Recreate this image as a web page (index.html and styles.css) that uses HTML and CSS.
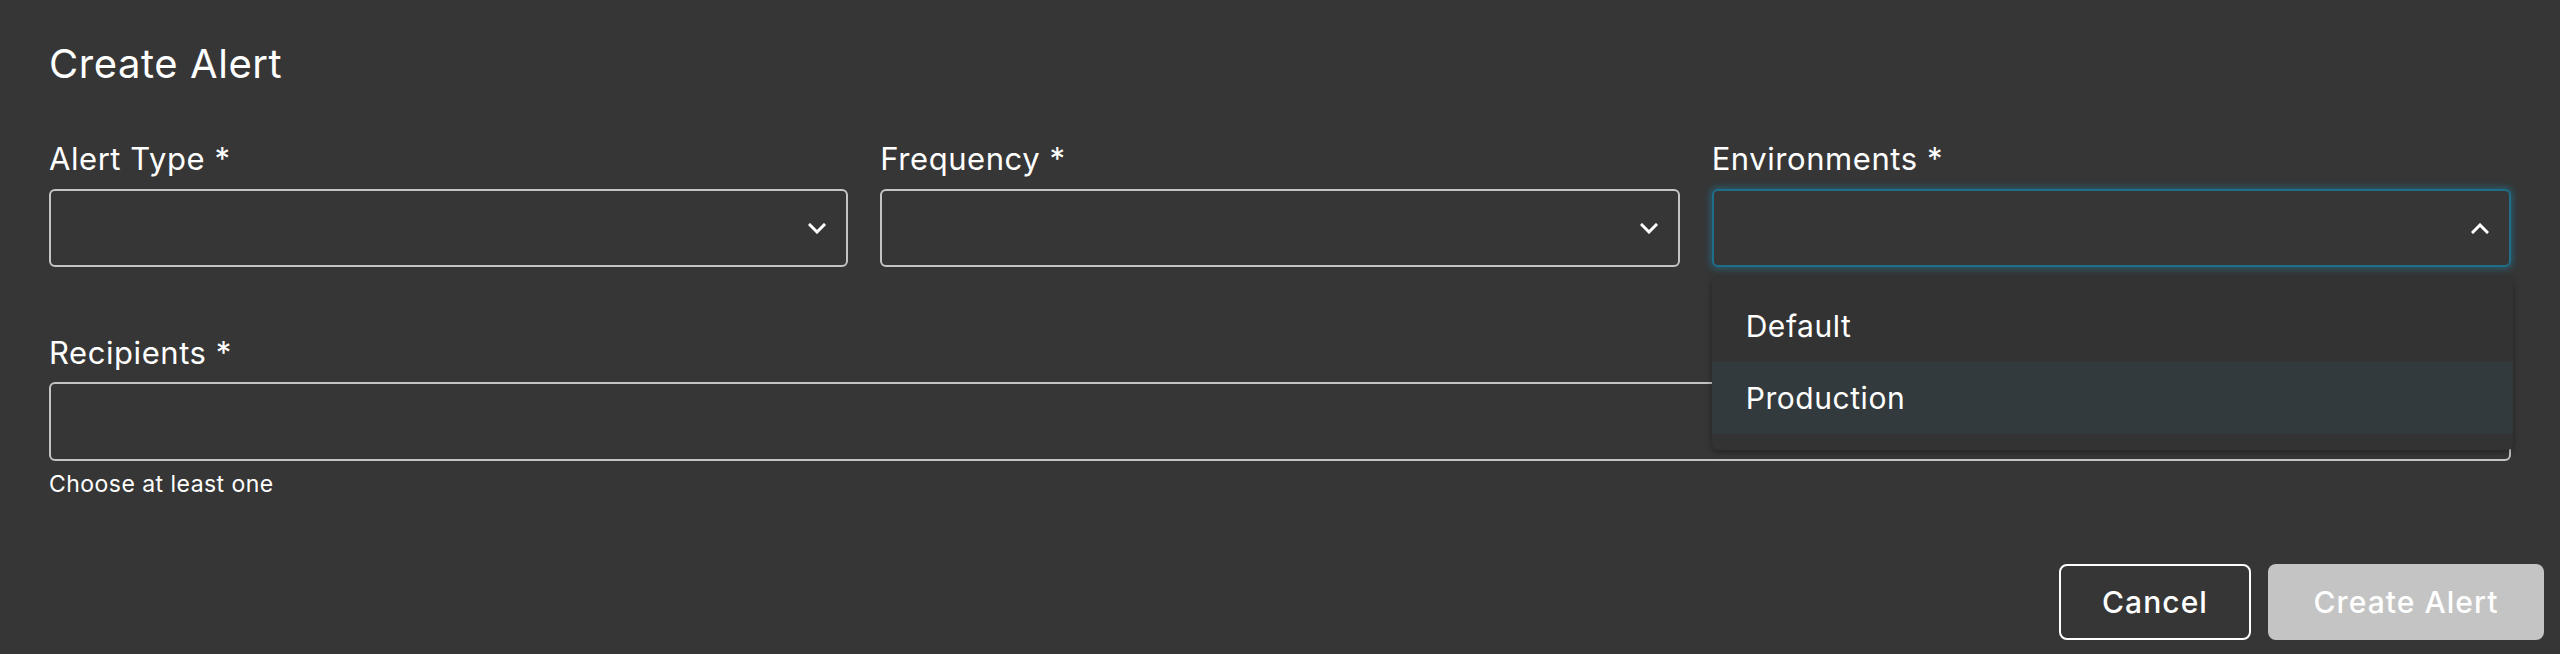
FILE: index.html
```html
<!DOCTYPE html>
<html lang="en">
<head>
<meta charset="utf-8">
<title>Create Alert</title>
<link rel="stylesheet" href="styles.css">
</head>
<body>
<div class="dialog">
  <h1 class="title">Create Alert</h1>
  <div class="row-three">
    <div class="field">
      <label class="label">Alert Type *</label>
      <div class="select">
        <svg class="chev" width="18" height="11" viewBox="0 0 18 11"><path d="M2 2 L9 9 L16 2" fill="none" stroke="#fff" stroke-width="3" stroke-linecap="square"/></svg>
      </div>
    </div>
    <div class="field">
      <label class="label">Frequency *</label>
      <div class="select">
        <svg class="chev" width="18" height="11" viewBox="0 0 18 11"><path d="M2 2 L9 9 L16 2" fill="none" stroke="#fff" stroke-width="3" stroke-linecap="square"/></svg>
      </div>
    </div>
    <div class="field field-open">
      <label class="label">Environments *</label>
      <div class="select select-focus">
        <svg class="chev" width="18" height="11" viewBox="0 0 18 11"><path d="M2 9 L9 2 L16 9" fill="none" stroke="#fff" stroke-width="3" stroke-linecap="square"/></svg>
      </div>
      <ul class="menu">
        <li class="menu-item">Default</li>
        <li class="menu-item menu-item-active">Production</li>
      </ul>
    </div>
  </div>
  <div class="field field-full">
    <label class="label">Recipients *</label>
    <div class="input"></div>
    <div class="helper">Choose at least one</div>
  </div>
  <div class="actions">
    <button class="btn btn-outline">Cancel</button>
    <button class="btn btn-disabled">Create Alert</button>
  </div>
</div>
</body>
</html>
```

FILE: styles.css
```css
html, body {
  margin: 0;
  padding: 0;
  background: #363636;
  height: 100%;
}
body {
  font-family: Inter, "Noto Sans", sans-serif;
  letter-spacing: 0.035em;
  color: #ffffff;
  overflow: hidden;
}
.dialog {
  padding: 40px 16px 0 49px;
  box-sizing: border-box;
  width: 2560px;
  height: 654px;
}
.title {
  margin: 0;
  font-size: 40px;
  line-height: 47px;
  font-weight: 400;
}
.row-three {
  display: grid;
  grid-template-columns: 1fr 1fr 1fr;
  column-gap: 32px;
  margin-top: 54px;
  margin-right: 33px;
}
.field {
  display: flex;
  flex-direction: column;
  position: relative;
}
.label {
  font-size: 31px;
  line-height: 36px;
  font-weight: 400;
  margin-bottom: 12px;
}
.select {
  height: 78px;
  box-sizing: border-box;
  border: 2px solid #c4c4c4;
  border-radius: 6px;
  display: flex;
  align-items: center;
  justify-content: flex-end;
  padding-right: 20px;
}
.select-focus {
  border-color: #1f6f8b;
  box-shadow: 0 0 6px 2px rgba(31, 115, 145, 0.6);
}
.chev {
  display: block;
}
.menu {
  position: absolute;
  left: 0;
  right: -2px;
  top: 136px;
  margin: 0;
  padding: 13px 0 16px;
  list-style: none;
  background: #333333;
  border-radius: 6px;
  box-shadow: 0 2px 6px rgba(0, 0, 0, 0.35);
  z-index: 5;
}
.menu-item {
  height: 72px;
  display: flex;
  align-items: center;
  padding-left: 34px;
  font-size: 30px;
}
.menu-item-active {
  background: #323a3e;
}
.field-full {
  margin-top: 68px;
  margin-right: 33px;
}
.field-full .label {
  margin-bottom: 11px;
}
.input {
  height: 79px;
  box-sizing: border-box;
  border: 2px solid #c4c4c4;
  border-radius: 6px;
}
.helper {
  font-size: 23px;
  line-height: 28px;
  margin-top: 9px;
  letter-spacing: 0.02em;
}
.actions {
  display: flex;
  justify-content: flex-end;
  gap: 17px;
  margin-top: 66px;
}
.btn {
  font-family: Inter, "Noto Sans", sans-serif;
  letter-spacing: 0.035em;
  font-size: 30px;
  font-weight: 500;
  height: 76px;
  border-radius: 8px;
  box-sizing: border-box;
  color: #ffffff;
  padding: 0;
}
.btn-outline {
  background: transparent;
  border: 2px solid #ffffff;
  width: 192px;
}
.btn-disabled {
  background: #c4c4c4;
  border: none;
  width: 276px;
}
```
